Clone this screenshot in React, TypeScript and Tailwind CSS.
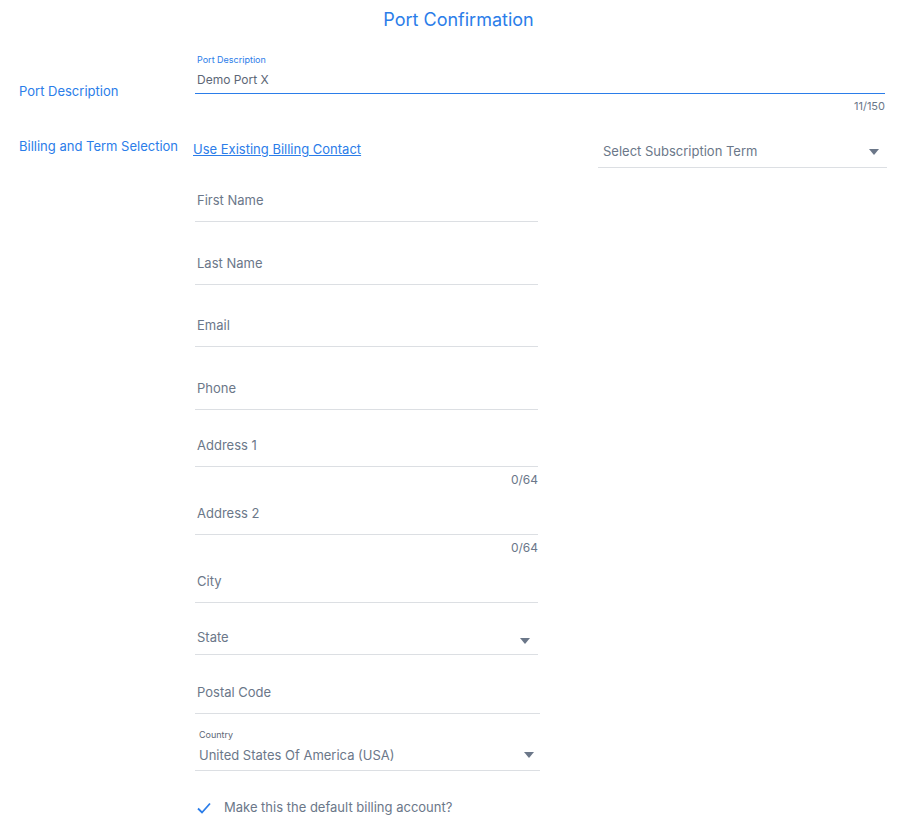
import React from "react";

const F = { fontFamily: "Inter, 'Noto Sans', sans-serif" };

function Caret() {
  return <svg width="10" height="6" viewBox="0 0 10 6"><path d="M0 0h10L5 6z" fill="#6b7789" /></svg>;
}

function Field({ label, h, pad = 10, counter, select, w = "w-[343px]" }: { label: string; h: number; pad?: number; counter?: string; select?: boolean; w?: string }) {
  return (
    <div className={w}>
      <div className="flex items-end justify-between border-b border-[#dcdfe3] pl-[2px] pr-[8px]" style={{ height: h, paddingBottom: pad }}>
        <span className="text-[13px] text-[#6b7789]">{label}</span>
        {select && <span className="mb-[4px]"><Caret /></span>}
      </div>
      {counter && <div className="text-right text-[12px] text-[#6b7789] leading-none mt-[7px]">{counter}</div>}
    </div>
  );
}

export default function App() {
  return (
    <div style={F} className="w-[917px] h-[836px] bg-white relative">
      <div className="text-center text-[18px] text-[#2b7de9] pt-[8px] leading-[24px]">Port Confirmation</div>
      <div className="flex mt-[22px]">
        <div className="w-[195px] pl-[19px] pt-[28px] text-[13px] text-[#2b7de9]">Port Description</div>
        <div className="w-[690px]">
          <div className="text-[9px] text-[#2b7de9] leading-[12px] pl-[2px]">Port Description</div>
          <div className="border-b border-[#2b7de9] pl-[2px] text-[12px] text-[#5d6776] pt-[6px] pb-[5px] leading-[16px]">Demo Port X</div>
          <div className="text-right text-[11px] text-[#6b7789] mt-[5px] leading-[14px]">11/150</div>
        </div>
      </div>
      <div className="flex mt-[24px]">
        <div className="w-[193px] pl-[19px] text-[13px] text-[#2b7de9] leading-[18px] whitespace-nowrap">Billing and Term Selection</div>
        <div className="flex flex-col">
          <div className="flex">
            <a className="text-[13px] text-[#2b7de9] underline leading-[18px] mt-[3px] w-[405px]">Use Existing Billing Contact</a>
            <div className="w-[289px] flex justify-between items-center border-b border-[#dcdfe3] pl-[5px] pr-[8px] pt-[5px] pb-[5px]">
              <span className="text-[13px] text-[#6b7789]">Select Subscription Term</span>
              <Caret />
            </div>
          </div>
          <div className="pl-[2px] -mt-[3px]">
            <Field label="First Name" h={57} />
            <Field label="Last Name" h={63} />
            <Field label="Email" h={62} />
            <Field label="Phone" h={63} />
            <Field label="Address 1" h={57} counter="0/64" />
            <Field label="Address 2" h={49} counter="0/64" />
            <Field label="City" h={49} />
            <Field label="State" h={52} pad={6} select />
            <Field label="Postal Code" h={59} w="w-[345px]" />
            <div className="w-[345px] border-b border-[#dcdfe3] pl-[4px] pr-[6px] pb-[5px] pt-[15px]">
              <div className="text-[9px] text-[#5d6776] leading-[12px]">Country</div>
              <div className="flex justify-between items-center mt-[5px]">
                <span className="text-[13px] text-[#6b7789]">United States Of America (USA)</span>
                <Caret />
              </div>
            </div>
            <div className="flex items-center gap-[13px] mt-[27px] pl-[2px]">
              <svg width="14" height="12" viewBox="0 0 14 12"><path d="M1 6.5l4 4L13 1.5" stroke="#2b7de9" strokeWidth="1.8" fill="none" /></svg>
              <span className="text-[13px] text-[#6b7789]">Make this the default billing account?</span>
            </div>
          </div>
        </div>
      </div>
    </div>
  );
}
